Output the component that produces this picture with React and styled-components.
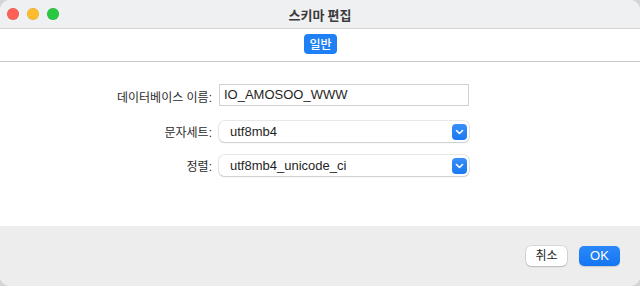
import React from 'react';
import styled, { createGlobalStyle } from 'styled-components';

const GlobalStyle = createGlobalStyle`
  html, body {
    margin: 0;
    padding: 0;
    background: #d4d4d4;
  }
  body {
    font-family: "Liberation Sans", "Noto Sans CJK KR", sans-serif;
    -webkit-font-smoothing: antialiased;
  }
`;

const Window = styled.div`
  width: 640px;
  height: 286px;
  background: #ffffff;
  border-radius: 10px;
  overflow: hidden;
  display: flex;
  flex-direction: column;
`;

const TitleBar = styled.div`
  position: relative;
  height: 28px;
  background: #eff0f2;
  border-bottom: 1px solid #d5d5d5;
  display: flex;
  align-items: center;
  justify-content: center;
  flex-shrink: 0;
`;

const Lights = styled.div`
  position: absolute;
  left: 7px;
  top: 8px;
  display: flex;
  gap: 8px;
`;

const Light = styled.span`
  width: 12px;
  height: 12px;
  border-radius: 50%;
  background: ${({ color }) => color};
  box-shadow: inset 0 0 0 0.5px rgba(0, 0, 0, 0.12);
`;

const Title = styled.div`
  font-family: "Noto Sans CJK KR", sans-serif;
  font-size: 13px;
  font-weight: 700;
  color: #3b3b3b;
`;

const TabBar = styled.div`
  height: 33px;
  border-bottom: 1px solid #c9c9c9;
  display: flex;
  justify-content: center;
  padding-top: 5px;
  box-sizing: border-box;
  flex-shrink: 0;
`;

const Tab = styled.div`
  height: 20px;
  padding: 0 5px;
  border-radius: 4px;
  background: ${({ active }) => (active ? '#1f7ff5' : 'transparent')};
  color: ${({ active }) => (active ? '#ffffff' : '#333')};
  font-family: "Noto Sans CJK KR", sans-serif;
  font-size: 12px;
  font-weight: 500;
  line-height: 20px;
  margin-left: 1px;
`;

const Content = styled.div`
  flex: 1;
  padding-top: 22px;
  box-sizing: border-box;
`;

const Form = styled.div`
  display: grid;
  grid-template-columns: 212px 250px;
  column-gap: 7px;
  row-gap: 13px;
  align-items: center;
`;

const Label = styled.label`
  justify-self: end;
  font-family: "Liberation Sans", "Noto Sans CJK KR", sans-serif;
  font-size: 12px;
  color: #2b2b2b;
`;

const TextInput = styled.div`
  height: 22px;
  box-sizing: border-box;
  border: 1px solid #d2d2d2;
  background: #fff;
  padding-left: 4px;
  font-size: 13px;
  line-height: 20px;
  color: #1f1f1f;
  margin-bottom: 2px;
`;

const Select = styled.div`
  height: 21px;
  box-sizing: border-box;
  border-radius: 5px;
  background: #fff;
  box-shadow: 0 0 0 0.5px rgba(0, 0, 0, 0.18), 0 1px 1.5px rgba(0, 0, 0, 0.12);
  display: flex;
  align-items: center;
  justify-content: space-between;
  padding: 0 2px 0 11px;
  font-size: 13px;
  color: #1f1f1f;
`;

const Chevron = styled.span`
  width: 15px;
  height: 16px;
  border-radius: 4px;
  background: linear-gradient(#3a8ff8, #1a78f2);
  display: flex;
  align-items: center;
  justify-content: center;
`;

const Footer = styled.div`
  height: 60px;
  background: #ecedec;
  display: flex;
  justify-content: flex-end;
  align-items: flex-start;
  gap: 12px;
  padding: 20px 20px 0 0;
  box-sizing: border-box;
  flex-shrink: 0;
`;

const Button = styled.button`
  width: 41px;
  height: 20px;
  border: none;
  border-radius: 5px;
  padding: 0;
  font-family: "Liberation Sans", "Noto Sans CJK KR", sans-serif;
  font-size: ${({ primary }) => (primary ? '13px' : '12px')};
  line-height: 20px;
  background: ${({ primary }) => (primary ? 'linear-gradient(#2a88f8, #1576f3)' : '#ffffff')};
  color: ${({ primary }) => (primary ? '#ffffff' : '#262626')};
  box-shadow: ${({ primary }) =>
    primary ? '0 0.5px 1px rgba(0,0,0,0.15)' : '0 0 0 0.5px rgba(0,0,0,0.18), 0 1px 1.5px rgba(0,0,0,0.14)'};
  font-weight: ${({ primary }) => (primary ? 500 : 400)};
`;

const ChevronIcon = () => (
  <svg width="9" height="6" viewBox="0 0 9 6">
    <path d="M1.5 1.5 L4.5 4.5 L7.5 1.5" fill="none" stroke="#fff" strokeWidth="1.6" strokeLinecap="round" strokeLinejoin="round" />
  </svg>
);

export default function App() {
  return (
    <>
      <GlobalStyle />
      <Window>
        <TitleBar>
          <Lights>
            <Light color="#fe5f57" />
            <Light color="#febc2e" />
            <Light color="#28c840" />
          </Lights>
          <Title>스키마 편집</Title>
        </TitleBar>
        <TabBar>
          <Tab active>일반</Tab>
        </TabBar>
        <Content>
          <Form>
            <Label>데이터베이스 이름:</Label>
            <TextInput>IO_AMOSOO_WWW</TextInput>
            <Label>문자세트:</Label>
            <Select>
              utf8mb4
              <Chevron><ChevronIcon /></Chevron>
            </Select>
            <Label>정렬:</Label>
            <Select>
              utf8mb4_unicode_ci
              <Chevron><ChevronIcon /></Chevron>
            </Select>
          </Form>
        </Content>
        <Footer>
          <Button>취소</Button>
          <Button primary>OK</Button>
        </Footer>
      </Window>
    </>
  );
}
